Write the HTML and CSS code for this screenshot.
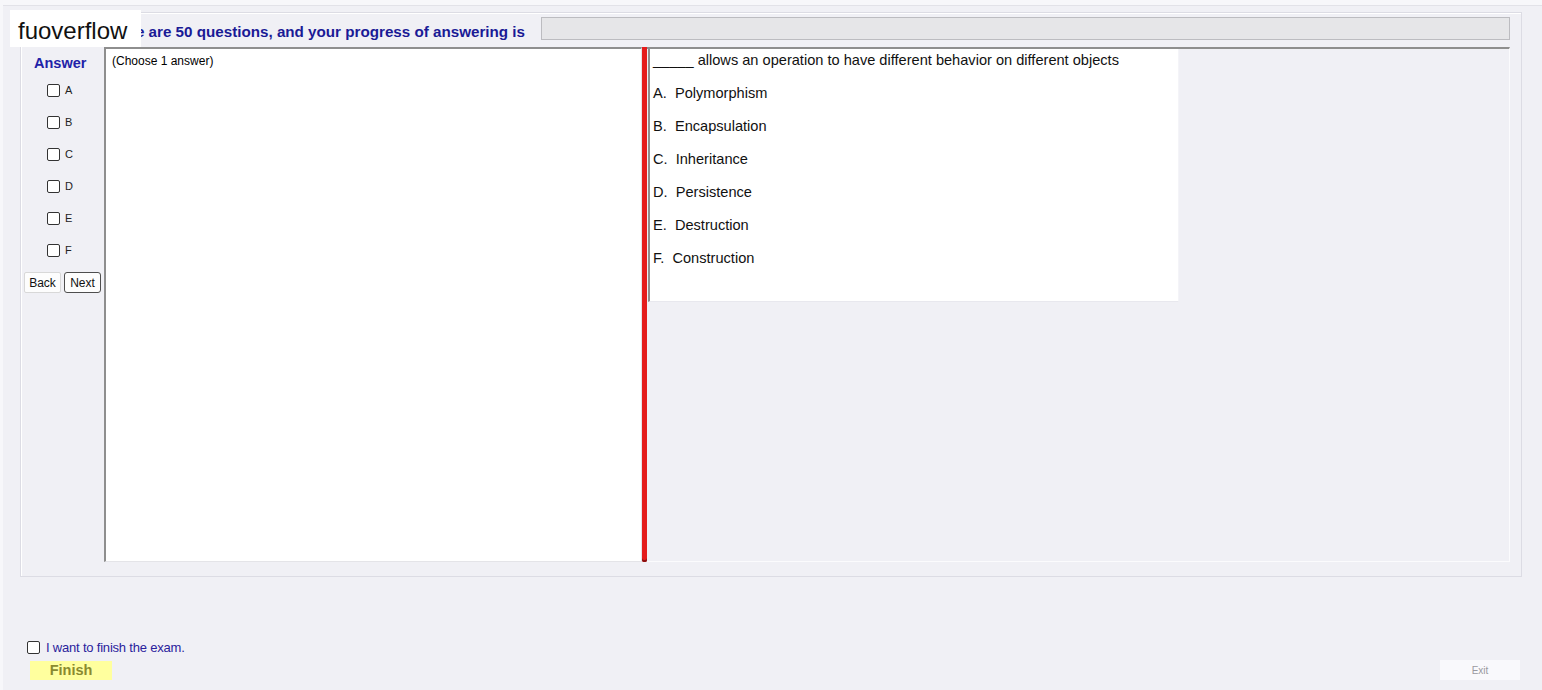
FILE: index.html
```html
<!DOCTYPE html>
<html lang="en">
<head>
    <meta charset="UTF-8">
    <title>Exam</title>
    <link rel="stylesheet" href="styles.css">
</head>
<body>
    <div class="topbar"></div>

    <div class="brand">fuoverflow</div>

    <div class="exam">
        <div class="progress-row">
            <div class="progress-label">There are 50 questions, and your progress of answering is</div>
            <div class="progress-bar"></div>
        </div>

        <div class="main">
            <div class="answer-col">
                <div class="answer-title">Answer</div>
                <label class="opt"><input type="checkbox"> A</label>
                <label class="opt"><input type="checkbox"> B</label>
                <label class="opt"><input type="checkbox"> C</label>
                <label class="opt"><input type="checkbox"> D</label>
                <label class="opt"><input type="checkbox"> E</label>
                <label class="opt"><input type="checkbox"> F</label>
                <div class="nav">
                    <button class="nav-btn">Back</button>
                    <button class="nav-btn active">Next</button>
                </div>
            </div>

            <div class="note-box">(Choose 1 answer)</div>

            <div class="splitter"></div>

            <div class="question-pane">
                <div class="question-box">
                    <p>_____ allows an operation to have different behavior on different objects</p>
                    <p>A.&nbsp; Polymorphism</p>
                    <p>B.&nbsp; Encapsulation</p>
                    <p>C.&nbsp; Inheritance</p>
                    <p>D.&nbsp; Persistence</p>
                    <p>E.&nbsp; Destruction</p>
                    <p>F.&nbsp; Construction</p>
                </div>
            </div>
        </div>
    </div>

    <div class="footer">
        <label class="finish-check"><input type="checkbox"> I want to finish the exam.</label>
        <div class="footer-row">
            <button class="finish-btn" disabled>Finish</button>
            <button class="exit-btn" disabled>Exit</button>
        </div>
    </div>
</body>
</html>
```

FILE: styles.css
```css
body {
    margin: 0;
    height: 690px;
    overflow: hidden;
    display: flex;
    flex-direction: column;
    background-color: #f0f0f5;
    font-family: "Liberation Sans", Arial, sans-serif;
    border-left: 3px solid #f7f7fa;
    box-sizing: border-box;
}

.topbar {
    height: 5px;
    background-color: #f7f7fa;
    border-bottom: 1px solid #e2e2e8;
}

/* watermark label over the top-left corner */
.brand {
    position: absolute;
    z-index: 5;
    left: 10px;
    top: 10px;
    width: 131px;
    height: 37px;
    background: #fff;
    font-size: 24px;
    line-height: 42px;
    padding-left: 8px;
    box-sizing: border-box;
    color: #111;
}

.exam {
    margin: 6px 20px 0 17px;
    border: 1px solid #dcdce4;
    box-shadow: inset 1px 1px 0 #fff;
    padding: 4px 11px 14px 3px;
}

.progress-row {
    display: flex;
    height: 23px;
    margin-bottom: 7px;
}

.progress-label {
    width: 517px;
    padding-right: 16px;
    box-sizing: border-box;
    text-align: right;
    font-size: 15.2px;
    font-weight: bold;
    line-height: 30px;
    color: #1a1a96;
    white-space: nowrap;
}

.progress-bar {
    flex: 1;
    background-color: #e6e6e8;
    border: 1px solid #bcbcc0;
}

.main {
    display: flex;
    height: 515px;
}

.answer-col {
    width: 80px;
    padding-top: 8px;
    box-sizing: border-box;
}

.answer-title {
    height: 16px;
    margin-bottom: 3px;
    padding-left: 10px;
    font-size: 14.5px;
    font-weight: bold;
    color: #2222a8;
}

.opt {
    display: flex;
    align-items: center;
    height: 32px;
    padding-left: 23px;
    font-size: 11px;
    color: #222;
}

.opt input,
.finish-check input {
    appearance: none;
    width: 13px;
    height: 13px;
    margin: 0 5px 0 0;
    border: 1px solid #333;
    border-radius: 2px;
    background: #fff;
}

.nav {
    display: flex;
    gap: 3px;
    margin-top: 6px;
}

.nav-btn {
    width: 37px;
    height: 21px;
    padding: 0;
    font-family: inherit;
    font-size: 12px;
    color: #111;
    background-color: #fdfdfd;
    border: 1px solid #d8d8d8;
    border-radius: 2px;
}

.nav-btn.active {
    border-color: #4e4e4e;
    border-radius: 3px;
}

.note-box {
    width: 538px;
    background: #fff;
    border-style: solid;
    border-width: 2px 1px 1px 2px;
    border-color: #8e8e8e #e4e4e8 #e4e4e8 #8e8e8e;
    padding: 5px 6px;
    box-sizing: border-box;
    font-size: 12px;
}

.splitter {
    width: 5px;
    background-color: #e41c1c;
    border-bottom-left-radius: 2px;
    border-bottom-right-radius: 2px;
    box-shadow: inset 0 -2px 0 #8a1010;
}

.question-pane {
    flex: 1;
    padding-left: 1px;
    border-top: 2px solid #8e8e8e;
    border-right: 1px solid #fbfbfd;
    border-bottom: 1px solid #fbfbfd;
}

.question-box {
    width: 531px;
    height: 253px;
    background: #fff;
    border-left: 2px solid #8e8e8e;
    border-right: 1px solid #f4f4f8;
    border-bottom: 1px solid #e8e8ee;
    padding: 3px 3px;
    box-sizing: border-box;
    font-size: 14.6px;
    color: #111;
}

.question-box p {
    margin: 0 0 16px;
    line-height: 17px;
}

.footer {
    margin-top: auto;
    padding: 0 22px 10px 24px;
}

.finish-check {
    display: flex;
    align-items: center;
    height: 16px;
    font-size: 13px;
    color: #2a229c;
    letter-spacing: -0.2px;
}

.finish-check input {
    margin-right: 6px;
}

.footer-row {
    display: flex;
    justify-content: space-between;
    align-items: center;
    margin-top: 5px;
    height: 20px;
}

.finish-btn {
    width: 82px;
    height: 19px;
    margin-left: 3px;
    padding: 0;
    font-family: inherit;
    font-size: 14.5px;
    font-weight: bold;
    color: #8a8a30;
    background-color: #ffff9e;
    border: none;
}

.exit-btn {
    width: 80px;
    height: 20px;
    padding: 0;
    font-family: inherit;
    font-size: 10px;
    color: #9a9aa0;
    background-color: #f9f9fc;
    border: none;
}
```
